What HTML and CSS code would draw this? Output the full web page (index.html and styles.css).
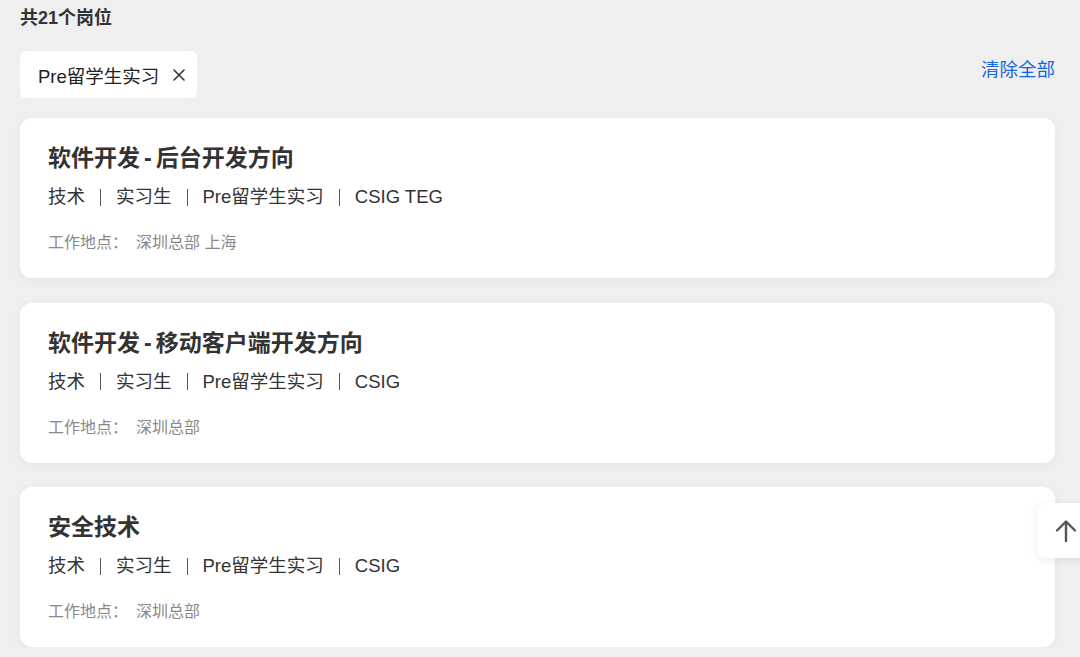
FILE: index.html
```html
<!DOCTYPE html>
<html lang="zh-CN">

<head>
  <meta charset="utf-8">
  <link rel="stylesheet" href="styles.css">
</head>

<body>
  <div class="container">
    <div class="total">共21个岗位</div>

    <div class="filterBar">
      <div class="chip">
        <span>Pre留学生实习</span>
        <svg class="chipClose" width="12" height="12" viewBox="0 0 12 12">
          <path d="M1 1 L11 11 M11 1 L1 11" stroke="#333" stroke-width="1.6" stroke-linecap="round"/>
        </svg>
      </div>
      <a class="clearAll">清除全部</a>
    </div>

    <div class="postList">
      <div class="postCard">
        <h3 class="postTitle">软件开发<span class="dash">-</span>后台开发方向</h3>
        <p class="postMeta">
          <span>技术</span><i class="sep"></i><span>实习生</span><i class="sep"></i><span>Pre留学生实习</span><i class="sep"></i><span>CSIG TEG</span>
        </p>
        <p class="postPlace"><span class="placeLabel">工作地点：</span>深圳总部 上海</p>
      </div>

      <div class="postCard">
        <h3 class="postTitle">软件开发<span class="dash">-</span>移动客户端开发方向</h3>
        <p class="postMeta">
          <span>技术</span><i class="sep"></i><span>实习生</span><i class="sep"></i><span>Pre留学生实习</span><i class="sep"></i><span>CSIG</span>
        </p>
        <p class="postPlace"><span class="placeLabel">工作地点：</span>深圳总部</p>
      </div>

      <div class="postCard">
        <h3 class="postTitle">安全技术</h3>
        <p class="postMeta">
          <span>技术</span><i class="sep"></i><span>实习生</span><i class="sep"></i><span>Pre留学生实习</span><i class="sep"></i><span>CSIG</span>
        </p>
        <p class="postPlace"><span class="placeLabel">工作地点：</span>深圳总部</p>
      </div>
    </div>
  </div>

  <!-- back to top -->
  <div class="backTop">
    <svg width="22" height="24" viewBox="0 0 22 24">
      <path d="M11 22 V3 M2 11.5 L11 2.5 L20 11.5" fill="none" stroke="#555" stroke-width="2.4" stroke-linecap="round" stroke-linejoin="round"/>
    </svg>
  </div>
</body>

</html>
```

FILE: styles.css
```css
body {
  margin: 0;
  background-color: #efefef;
  font-family: "Liberation Sans", "Noto Sans CJK SC", sans-serif;
  color: #333;
  overflow: hidden;
}

.container {
  padding: 7px 25px 0 20px;
}

.total {
  font-size: 18px;
  font-weight: bold;
  line-height: 22px;
  color: #333;
}

.filterBar {
  display: flex;
  align-items: flex-start;
  justify-content: space-between;
  margin-top: 22px;
}

.chip {
  display: flex;
  align-items: center;
  background-color: #fff;
  border-radius: 6px;
  height: 47px;
  padding: 0 12px 0 18px;
  font-size: 18.5px;
  color: #222;
}

.chipClose {
  margin-left: 14px;
}

.clearAll {
  font-size: 18.5px;
  line-height: 24px;
  margin-top: 7px;
  color: #1467e0;
  cursor: pointer;
}

.postList {
  display: flex;
  flex-direction: column;
  gap: 24.5px;
  margin-top: 20px;
}

.postCard {
  background-color: #fff;
  border-radius: 12px;
  padding: 26px 28px 25px;
  box-shadow: 0 3px 8px rgba(0, 0, 0, 0.04);
}

.postTitle {
  margin: 0;
  font-size: 23px;
  line-height: 28px;
  font-weight: bold;
  color: #333;
}

.dash {
  margin: 0 4px;
}

.postMeta {
  display: flex;
  align-items: center;
  margin: 13px 0 0;
  font-size: 18.5px;
  line-height: 24px;
  color: #333;
}

.sep {
  display: inline-block;
  width: 1px;
  height: 17px;
  background-color: #555;
  margin: 0 15px;
}

.postPlace {
  margin: 24px 0 0;
  font-size: 16px;
  line-height: 20px;
  color: #888;
}

.placeLabel {
  margin-right: 8px;
}

.backTop {
  position: absolute;
  left: 1037px;
  top: 503px;
  width: 56px;
  height: 55px;
  background-color: #fff;
  border-radius: 8px 0 0 8px;
  box-shadow: 0 2px 8px rgba(0, 0, 0, 0.08);
  display: flex;
  align-items: center;
  padding-left: 18px;
  box-sizing: border-box;
}
```
